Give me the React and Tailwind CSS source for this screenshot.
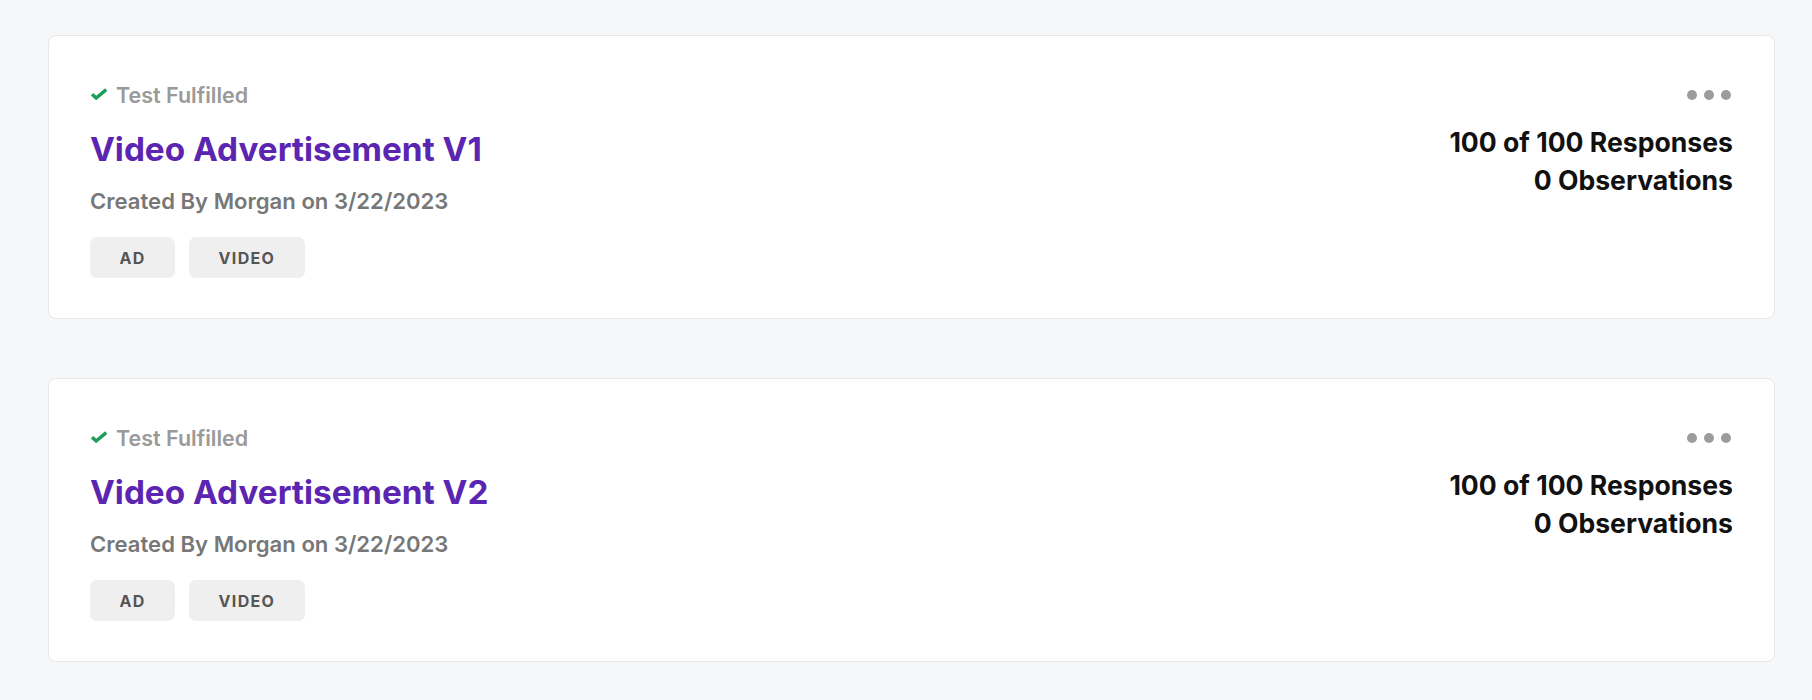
import React from 'react';

const tests = [
  { id: 1, name: 'Video Advertisement V1', author: 'Morgan', date: '3/22/2023', tags: ['AD', 'VIDEO'], responses: 100, target: 100, observations: 0 },
  { id: 2, name: 'Video Advertisement V2', author: 'Morgan', date: '3/22/2023', tags: ['AD', 'VIDEO'], responses: 100, target: 100, observations: 0 },
];

const CheckIcon = () => (
  <svg width="18" height="12" viewBox="0 0 18 12" fill="none" className="shrink-0 -mt-[3px]">
    <path d="M2 6.2 L6.2 10 L16.2 1.6" stroke="#1d9e5a" strokeWidth="3.4" strokeLinejoin="miter" />
  </svg>
);

const TestCard = ({ test }) => (
  <div className="bg-white border border-[#e6e7ea] rounded-[8px] pt-[47px] pb-[40px] px-[41px] flex justify-between">
    <div className="flex flex-col">
      <div className="h-[24px] flex items-center gap-[8px]">
        <CheckIcon />
        <span className="text-[21.5px] font-semibold text-[#9a9a9a] leading-[24px]">Test Fulfilled</span>
      </div>
      <h2 className="mt-[22px] text-[33.3px] font-bold text-[#5b25b1] leading-[40px]">{test.name}</h2>
      <p className="mt-[18px] text-[22.1px] font-semibold text-[#777777] leading-[28px]">
        Created By {test.author} on {test.date}
      </p>
      <div className="mt-[22px] flex gap-[14px]">
        {test.tags.map((tag) => (
          <span
            key={tag}
            className="h-[41px] px-[29.5px] flex items-center rounded-[7px] bg-[#efefef] text-[#555555] text-[16px] font-bold tracking-[1.3px]"
          >
            {tag}
          </span>
        ))}
      </div>
    </div>

    <div className="flex flex-col items-end">
      <div className="h-[24px] flex items-center gap-[7px] pr-[2px]">
        <span className="w-[10px] h-[10px] rounded-full bg-[#9c9c9c]" />
        <span className="w-[10px] h-[10px] rounded-full bg-[#9c9c9c]" />
        <span className="w-[10px] h-[10px] rounded-full bg-[#9c9c9c]" />
      </div>
      <div className="mt-[16px] text-right text-[26.6px] font-bold text-[#111111] leading-[38px]">
        <p>{test.responses} of {test.target} Responses</p>
        <p>{test.observations} Observations</p>
      </div>
    </div>
  </div>
);

export default function App() {
  return (
    <div className="min-h-screen bg-[#f6f7f9] pt-[35px] pl-[48px] pb-[37px]" style={{ fontFamily: 'Inter, "Liberation Sans", sans-serif' }}>
      <div className="w-[1727px] flex flex-col gap-[59px]">
        {tests.map((test) => (
          <TestCard key={test.id} test={test} />
        ))}
      </div>
    </div>
  );
}
